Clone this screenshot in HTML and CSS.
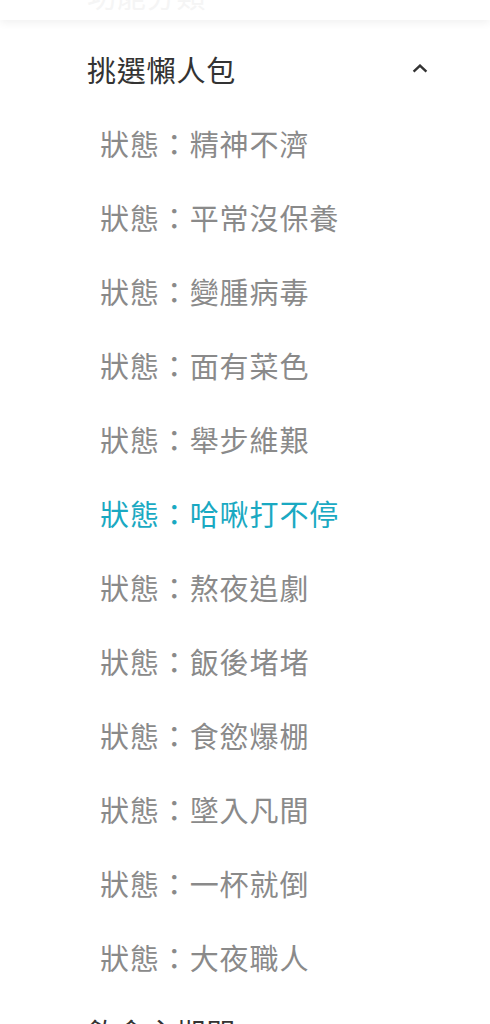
FILE: index.html
```html
<!DOCTYPE html>
<html lang="zh-Hant">
<head>
<meta charset="utf-8">
<link rel="stylesheet" href="styles.css">
</head>
<body>
<div class="topbar">
  <div class="topbar-row">
    <span class="topbar-title">功能分類</span>
    <svg class="chev chev-faint" viewBox="0 0 16 9" width="16" height="9"><path d="M1.5 7.5 L8 1.5 L14.5 7.5" fill="none" stroke="#f2f2f2" stroke-width="2.4"/></svg>
  </div>
</div>
<div class="menu">
  <div class="group-head">
    <span class="group-title">挑選懶人包</span>
    <svg class="chev" viewBox="0 0 16 9" width="16" height="9"><path d="M1.6 7.6 L8 1.6 L14.4 7.6" fill="none" stroke="#333333" stroke-width="2.4"/></svg>
  </div>
  <ul class="items">
    <li class="item">狀態：精神不濟</li>
    <li class="item">狀態：平常沒保養</li>
    <li class="item">狀態：變腫病毒</li>
    <li class="item">狀態：面有菜色</li>
    <li class="item">狀態：舉步維艱</li>
    <li class="item active">狀態：哈啾打不停</li>
    <li class="item">狀態：熬夜追劇</li>
    <li class="item">狀態：飯後堵堵</li>
    <li class="item">狀態：食慾爆棚</li>
    <li class="item">狀態：墜入凡間</li>
    <li class="item">狀態：一杯就倒</li>
    <li class="item">狀態：大夜職人</li>
  </ul>
  <div class="group-head">
    <span class="group-title">飲食主期間</span>
  </div>
</div>
</body>
</html>
```

FILE: styles.css
```css
html, body {
  margin: 0;
  padding: 0;
  background: #ffffff;
}
body {
  font-family: "Noto Sans CJK TC", "Noto Sans", sans-serif;
  width: 490px;
  height: 1024px;
  overflow: hidden;
}
.topbar {
  height: 20px;
  overflow: hidden;
  position: relative;
  z-index: 1;
  background: #ffffff;
  box-shadow: 0 3px 9px rgba(0, 0, 0, 0.06);
}
.topbar-row {
  margin-top: -42px;
  height: 74px;
  display: flex;
  align-items: center;
  justify-content: space-between;
  padding: 0 62px 0 87px;
}
.topbar-title {
  font-size: 29px;
  color: #f5f5f5;
  letter-spacing: 0.8px;
}
.menu {
  padding-top: 11px;
}
.group-head {
  height: 75px;
  display: flex;
  align-items: center;
  justify-content: space-between;
  padding: 0 62px 0 87px;
}
.group-title {
  font-size: 29px;
  color: #333333;
  letter-spacing: 0.8px;
}
.chev {
  display: block;
}
.items {
  list-style: none;
  margin: 0;
  padding: 0;
}
.item {
  height: 74px;
  display: flex;
  align-items: center;
  padding-left: 100px;
  font-size: 29px;
  color: #8a8a8a;
  letter-spacing: 0.9px;
}
.item.active {
  color: #1aa9c2;
}
```
